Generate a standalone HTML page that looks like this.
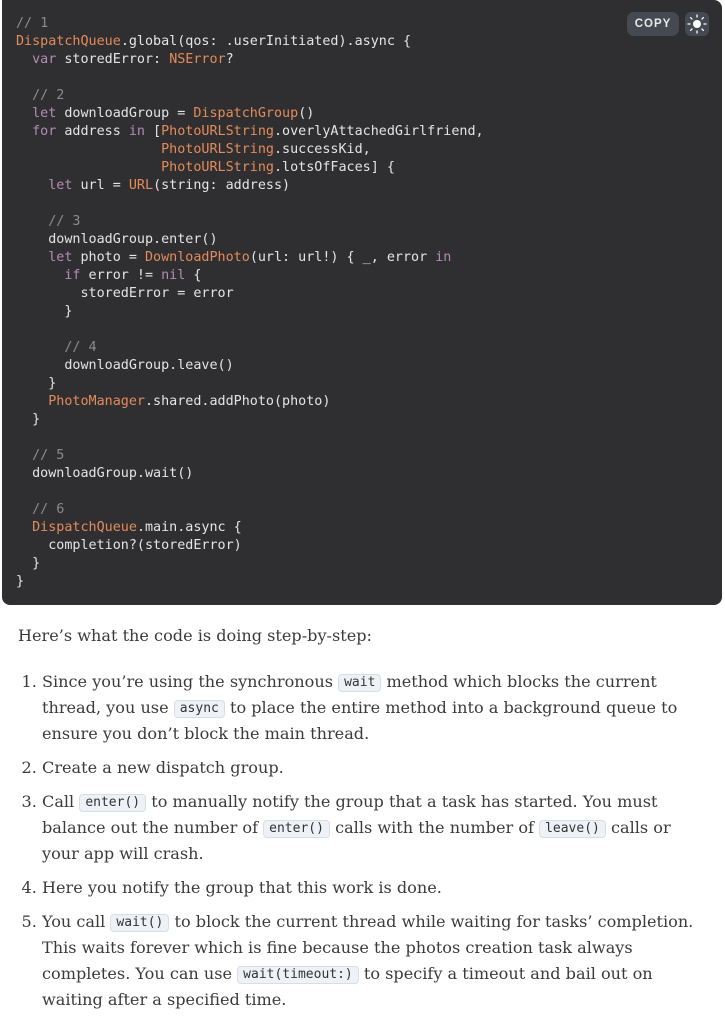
<!DOCTYPE html>
<html><head><meta charset="utf-8"><style>
html,body{margin:0;padding:0;background:#fff;width:725px;height:986px;overflow:hidden}
.code{position:absolute;left:2px;top:0;width:720px;height:605px;background:#2f2f32;border-radius:0 8px 8px 8px;}
pre{margin:0;position:absolute;left:14px;top:15px;font-family:"DejaVu Sans Mono","Liberation Mono",monospace;font-size:13.4px;line-height:18px;color:#e4e4e4}
.c{color:#8b8b8b}.k{color:#b48bb5}.t{color:#e38b5a}
.copy{position:absolute;left:625px;top:12px;width:52px;height:24px;border-radius:7px;background:#454a52;color:#e8e8e8;font:600 11.5px "Liberation Sans",sans-serif;letter-spacing:1px;text-align:center;line-height:24px}
.sun{position:absolute;left:683px;top:12px;width:24px;height:24px;border-radius:6px;background:#454a52}
.txt{position:absolute;left:18px;top:623px;width:720px;font-family:"DejaVu Serif",serif;font-size:16.1px;line-height:26px;color:#3b3b3b;white-space:nowrap}
p{margin:0 0 20px 0}
ol{margin:0;padding-left:24px}
li{margin-bottom:8px;padding-left:0;line-height:26px}
code{font-family:"DejaVu Sans Mono",monospace;font-size:13px;line-height:14px;display:inline-block;background:#eef2f7;border:1px solid #d6dee8;border-radius:4px;padding:1px 5px;color:#333;vertical-align:1px}
</style></head><body>
<div class="code">
<pre><span class="c">// 1</span>
<span class="t">DispatchQueue</span>.global(qos: .userInitiated).async {
  <span class="k">var</span> storedError: <span class="t">NSError</span>?

  <span class="c">// 2</span>
  <span class="k">let</span> downloadGroup = <span class="t">DispatchGroup</span>()
  <span class="k">for</span> address <span class="k">in</span> [<span class="t">PhotoURLString</span>.overlyAttachedGirlfriend,
                  <span class="t">PhotoURLString</span>.successKid,
                  <span class="t">PhotoURLString</span>.lotsOfFaces] {
    <span class="k">let</span> url = <span class="t">URL</span>(string: address)

    <span class="c">// 3</span>
    downloadGroup.enter()
    <span class="k">let</span> photo = <span class="t">DownloadPhoto</span>(url: url!) { _, error <span class="k">in</span>
      <span class="k">if</span> error != <span class="k">nil</span> {
        storedError = error
      }

      <span class="c">// 4</span>
      downloadGroup.leave()
    }
    <span class="t">PhotoManager</span>.shared.addPhoto(photo)
  }

  <span class="c">// 5</span>
  downloadGroup.wait()

  <span class="c">// 6</span>
  <span class="t">DispatchQueue</span>.main.async {
    completion?(storedError)
  }
}</pre>
<div class="copy">COPY</div>
<div class="sun"><svg width="24" height="24" viewBox="0 0 24 24"><circle cx="12" cy="12" r="4" fill="#fff"/><g stroke="#fff" stroke-width="1.3" stroke-linecap="round"><path d="M12 3v2M12 19v2M3 12h2M19 12h2M5.6 5.6l1.4 1.4M17 17l1.4 1.4M5.6 18.4L7 17M17 7l1.4-1.4"/></g></svg></div>
</div>
<div class="txt">
<p>Here’s what the code is doing step-by-step:</p>
<ol>
<li>Since you’re using the synchronous <code>wait</code> method which blocks the current<br>thread, you use <code>async</code> to place the entire method into a background queue to<br>ensure you don’t block the main thread.</li>
<li>Create a new dispatch group.</li>
<li>Call <code>enter()</code> to manually notify the group that a task has started. You must<br>balance out the number of <code>enter()</code> calls with the number of <code>leave()</code> calls or<br>your app will crash.</li>
<li>Here you notify the group that this work is done.</li>
<li>You call <code>wait()</code> to block the current thread while waiting for tasks’ completion.<br>This waits forever which is fine because the photos creation task always<br>completes. You can use <code>wait(timeout:)</code> to specify a timeout and bail out on<br>waiting after a specified time.</li>
</ol>
</div>
</body></html>
